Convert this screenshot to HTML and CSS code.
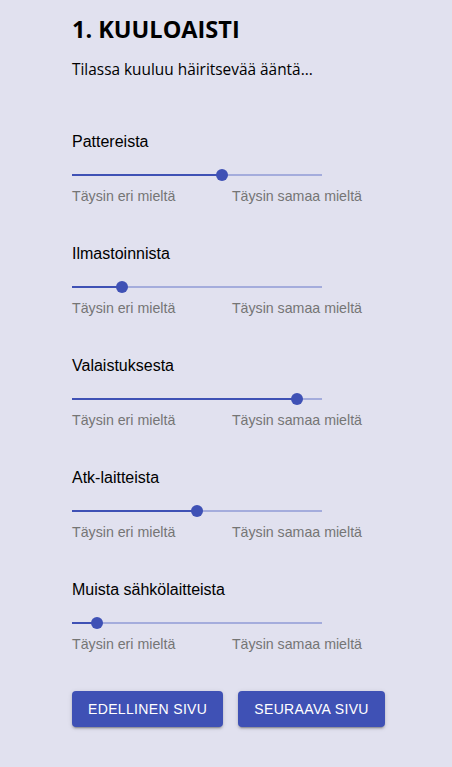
FILE: index.html
```html
<!DOCTYPE html>
<html lang="fi">
<head>
<meta charset="utf-8">
<title>Kuuloaisti</title>
<link rel="stylesheet" href="styles.css">
</head>
<body>
<main class="page">
  <h1 class="title">1. KUULOAISTI</h1>
  <p class="intro">Tilassa kuuluu häiritsevää ääntä...</p>

  <section class="question">
    <div class="q-label">Pattereista</div>
    <div class="slider"><div class="track"><div class="fill" style="width:60%"></div><div class="thumb" style="left:60%"></div></div></div>
    <div class="scale"><span>Täysin eri mieltä</span><span>Täysin samaa mieltä</span></div>
  </section>

  <section class="question">
    <div class="q-label">Ilmastoinnista</div>
    <div class="slider"><div class="track"><div class="fill" style="width:20%"></div><div class="thumb" style="left:20%"></div></div></div>
    <div class="scale"><span>Täysin eri mieltä</span><span>Täysin samaa mieltä</span></div>
  </section>

  <section class="question">
    <div class="q-label">Valaistuksesta</div>
    <div class="slider"><div class="track"><div class="fill" style="width:90%"></div><div class="thumb" style="left:90%"></div></div></div>
    <div class="scale"><span>Täysin eri mieltä</span><span>Täysin samaa mieltä</span></div>
  </section>

  <section class="question">
    <div class="q-label">Atk-laitteista</div>
    <div class="slider"><div class="track"><div class="fill" style="width:50%"></div><div class="thumb" style="left:50%"></div></div></div>
    <div class="scale"><span>Täysin eri mieltä</span><span>Täysin samaa mieltä</span></div>
  </section>

  <section class="question">
    <div class="q-label">Muista sähkölaitteista</div>
    <div class="slider"><div class="track"><div class="fill" style="width:10%"></div><div class="thumb" style="left:10%"></div></div></div>
    <div class="scale"><span>Täysin eri mieltä</span><span>Täysin samaa mieltä</span></div>
  </section>

  <div class="buttons">
    <button class="btn">Edellinen sivu</button>
    <button class="btn">Seuraava sivu</button>
  </div>
</main>
</body>
</html>
```

FILE: styles.css
```css
html, body {
  margin: 0;
  padding: 0;
  background: #e1e1ef;
}
body {
  font-family: "Liberation Sans", Arial, sans-serif;
  color: #111;
}
.page {
  padding: 0 0 40px 72px;
  display: flex;
  flex-direction: column;
}
.title {
  margin: 0;
  padding-top: 14px;
  font-family: "Open Sans", "DejaVu Sans", sans-serif;
  font-weight: 700;
  font-size: 23.5px;
  line-height: 30px;
  color: #000;
}
.intro {
  margin: 14px 0 0 0;
  font-family: "Open Sans", "DejaVu Sans", sans-serif;
  font-size: 15.4px;
  line-height: 24px;
  color: #000;
}
.question {
  width: 290px;
  display: flex;
  flex-direction: column;
}
.question:first-of-type {
  margin-top: 48px;
}
.question + .question {
  margin-top: 36px;
}
.q-label {
  font-size: 16px;
  line-height: 24px;
  color: #000;
}
.slider {
  height: 32px;
  width: 250px;
  position: relative;
}
.track {
  position: absolute;
  left: 0;
  right: 0;
  top: 20px;
  height: 2px;
  background: #a4acdc;
}
.fill {
  height: 2px;
  background: #3f51b5;
}
.thumb {
  position: absolute;
  top: 1px;
  width: 12px;
  height: 12px;
  margin: -6px 0 0 -6px;
  border-radius: 50%;
  background: #3f51b5;
}
.scale {
  display: flex;
  justify-content: space-between;
  font-size: 14.2px;
  line-height: 20px;
  color: #757575;
}
.buttons {
  display: flex;
  gap: 15px;
  margin-top: 37px;
}
.btn {
  height: 36px;
  padding: 0 16px;
  border: none;
  border-radius: 4px;
  background: #3f51b5;
  color: #fff;
  font-family: "Liberation Sans", Arial, sans-serif;
  font-size: 14px;
  font-weight: 400;
  letter-spacing: 0.35px;
  text-transform: uppercase;
  box-shadow: 0 3px 1px -2px rgba(0,0,0,.2), 0 2px 2px 0 rgba(0,0,0,.14), 0 1px 5px 0 rgba(0,0,0,.12);
}
```
